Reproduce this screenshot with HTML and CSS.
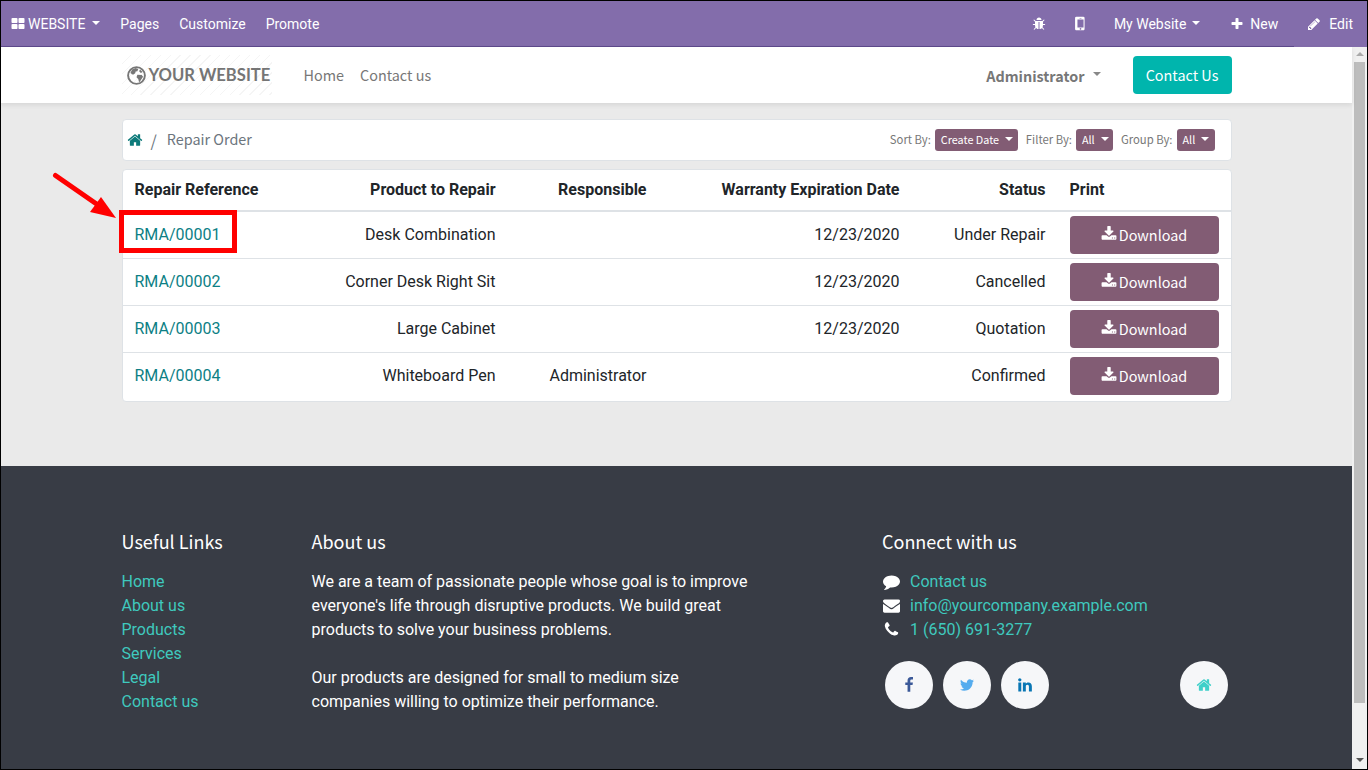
FILE: index.html
```html
<!DOCTYPE html>
<html lang="en">
<head>
<meta charset="utf-8">
<title>Repair Order</title>
<link rel="stylesheet" href="styles.css">
</head>
<body>
<svg class="defs" width="0" height="0" aria-hidden="true">
<symbol id="i-home" viewBox="0 0 1792 1792"><path d="M1472 992v480q0 26-19 45t-45 19h-384v-384h-256v384h-384q-26 0-45-19t-19-45v-480q0-1 .5-3t.5-3l575-474 575 474q1 2 1 6zm223-69l-62 74q-8 9-21 11h-3q-13 0-21-7l-692-577-692 577q-12 8-24 7-13-2-21-11l-62-74q-8-10-7-23.5t11-21.5l719-599q32-26 76-26t76 26l244 204v-195q0-14 9-23t23-9h192q14 0 23 9t9 23v408l219 182q10 8 11 21.5t-7 23.5z"/></symbol>
<symbol id="i-fb" viewBox="0 0 1792 1792"><path d="M1343 12v264h-157q-86 0-116 36t-30 108v189h293l-39 296h-254v759h-306v-759h-255v-296h255v-218q0-186 104-288.5t277-102.5q147 0 228 12z"/></symbol>
<symbol id="i-tw" viewBox="0 0 1792 1792"><path d="M1684 408q-67 98-162 167 1 14 1 42 0 130-38 259.5t-115.5 248.5-184.5 210.5-258 146-323 54.5q-271 0-496-145 35 4 78 4 225 0 401-138-105-2-188-64.5t-114-159.5q33 5 61 5 43 0 85-11-112-23-185.5-111.5t-73.5-205.5v-4q68 38 146 41-66-44-105-115t-39-154q0-88 44-163 121 149 294.5 238.5t371.5 99.5q-8-38-8-74 0-134 94.5-228.5t228.5-94.5q140 0 236 102 109-21 205-78-37 115-142 178 92-10 184-50z"/></symbol>
<symbol id="i-in" viewBox="0 0 1792 1792"><path d="M477 625v991h-330v-991h330zm21-306q1 73-50.5 122t-135.5 49h-2q-82 0-132-49t-50-122q0-74 51.5-122.5t134.5-48.5 133 48.5 51 122.5zm1166 729v568h-329v-530q0-105-40.5-164.5t-126.5-59.5q-63 0-105.5 34.5t-63.5 85.5q-11 30-11 81v553h-329q2-399 2-647t-1-296l-1-48h329v144h-2q20-32 41-56t56.5-52 87-43.5 114.5-15.5q171 0 275 113.5t104 332.5z"/></symbol>
<symbol id="i-plus" viewBox="0 0 1792 1792"><path d="M1600 736v192q0 40-28 68t-68 28h-416v416q0 40-28 68t-68 28h-192q-40 0-68-28t-28-68v-416h-416q-40 0-68-28t-28-68v-192q0-40 28-68t68-28h416v-416q0-40 28-68t68-28h192q40 0 68 28t28 68v416h416q40 0 68 28t28 68z"/></symbol>
<symbol id="i-pencil" viewBox="0 0 1792 1792"><path d="M491 1536l91-91-235-235-91 91v107h128v128h107zm523-928q0-22-22-22-10 0-17 7l-542 542q-7 7-7 17 0 22 22 22 10 0 17-7l542-542q7-7 7-17zm-54-192l416 416-832 832h-416v-416zm683 96q0 53-37 90l-166 166-416-416 166-165q36-38 90-38 53 0 91 38l235 234q37 39 37 91z"/></symbol>
<symbol id="i-th" viewBox="0 0 1792 1792"><path d="M832 1024v384q0 52-38 90t-90 38h-512q-52 0-90-38t-38-90v-384q0-52 38-90t90-38h512q52 0 90 38t38 90zm0-768v384q0 52-38 90t-90 38h-512q-52 0-90-38t-38-90v-384q0-52 38-90t90-38h512q52 0 90 38t38 90zm896 768v384q0 52-38 90t-90 38h-512q-52 0-90-38t-38-90v-384q0-52 38-90t90-38h512q52 0 90 38t38 90zm0-768v384q0 52-38 90t-90 38h-512q-52 0-90-38t-38-90v-384q0-52 38-90t90-38h512q52 0 90 38t38 90z"/></symbol>
<symbol id="i-dl" viewBox="0 0 1792 1792"><path d="M1344 1344q0-26-19-45t-45-19-45 19-19 45 19 45 45 19 45-19 19-45zm256 0q0-26-19-45t-45-19-45 19-19 45 19 45 45 19 45-19 19-45zm128-224v320q0 40-28 68t-68 28h-1472q-40 0-68-28t-28-68v-320q0-40 28-68t68-28h465l135 136q58 56 136 56t136-56l136-136h464q40 0 68 28t28 68zm-325-569q17 41-14 70l-448 448q-18 19-45 19t-45-19l-448-448q-31-29-14-70 17-39 59-39h256v-448q0-26 19-45t45-19h256q26 0 45 19t19 45v448h256q42 0 59 39z"/></symbol>
<symbol id="i-env" viewBox="0 0 1792 1792"><path d="M1792 710v794q0 66-47 113t-113 47h-1472q-66 0-113-47t-47-113v-794q44 49 101 87 362 246 497 345 57 42 92.5 65.5t94.5 48 110 24.5h2q51 0 110-24.5t94.5-48 92.5-65.5q170-123 498-345 57-39 100-87zm0-294q0 79-49 151t-122 123q-376 261-468 325-10 7-42.5 30.5t-54 38-52 32.5-57.5 27-50 9h-2q-23 0-50-9t-57.5-27-52-32.5-54-38-42.5-30.5q-91-64-262-182.5t-205-142.5q-62-42-117-115.5t-55-136.5q0-78 41.5-130t118.5-52h1472q65 0 112.5 47t47.5 113z"/></symbol>
<symbol id="i-comment" viewBox="0 0 1792 1792"><path d="M1792 896q0 174-120 321.5t-326 233-450 85.5q-70 0-145-8-198 175-460 242-49 14-114 22-17 2-30.5-9t-17.5-29v-1q-3-4-.5-12t2-10 4.5-9.5l6-9 7-8.5 8-9q7-8 31-34.5t34.5-38 31-39.5 32.5-51 27-59 26-76q-157-89-247.5-220t-90.5-281q0-130 71-248.5t191-204.5 286-136.5 348-50.5q244 0 450 85.5t326 233 120 321.5z"/></symbol>
<symbol id="i-phone" viewBox="0 0 1792 1792"><path d="M1600 1240q0 27-10 70.5t-21 68.5q-21 50-122 106-94 51-186 51-27 0-53-3.5t-57.5-12.5-47-14.5-55.5-20.5-49-18q-98-35-175-83-127-79-264-216t-216-264q-48-77-83-175-3-9-18-49t-20.5-55.5-14.5-47-12.5-57.5-3.5-53q0-92 51-186 56-101 106-122 25-11 68.5-21t70.5-10q14 0 21 3 18 6 53 76 11 19 30 54t35 63.5 31 53.5q3 4 17.5 25t21.5 35.5 7 28.5q0 20-28.5 50t-62 55-62 53-28.5 46q0 9 5 22.5t8.5 20.5 14 24 11.5 19q76 137 174 235t235 174q2 1 19 11.5t24 14 20.5 8.5 22.5 5q18 0 46-28.5t53-62 55-62 50-28.5q14 0 28.5 7t35.5 21.5 25 17.5q25 15 53.5 31t63.5 35 54 30q70 35 76 53 3 7 3 21z"/></symbol>
<symbol id="i-bug" viewBox="0 0 1792 1792"><path d="M1696 960q0 26-19 45t-45 19h-224q0 171-67 290l208 209q19 19 19 45t-19 45q-18 19-45 19t-45-19l-198-197q-5 5-15 13t-42 28.5-65 36.5-82 29-97 13v-896h-128v896q-51 0-101.5-13.5t-87-33-66-39-43.5-32.5l-15-14-183 207q-20 21-48 21-24 0-43-16-19-18-20.5-44.5t15.5-46.5l202-227q-58-114-58-274h-224q-26 0-45-19t-19-45 19-45 45-19h224v-294l-173-173q-19-19-19-45t19-45 45-19 45 19l173 173h844l173-173q19-19 45-19t45 19 19 45-19 45l-173 173v294h224q26 0 45 19t19 45zm-480-576h-640q0-133 93.5-226.5t226.5-93.5 226.5 93.5 93.5 226.5z"/></symbol>
<symbol id="i-mobile" viewBox="0 0 1792 1792"><path d="M976 1408q0-33-23.5-56.5t-56.5-23.5-56.5 23.5-23.5 56.5 23.5 56.5 56.5 23.5 56.5-23.5 23.5-56.5zm208-160v-704q0-13-9.5-22.5t-22.5-9.5h-512q-13 0-22.5 9.5t-9.5 22.5v704q0 13 9.5 22.5t22.5 9.5h512q13 0 22.5-9.5t9.5-22.5zm-192-848q0-16-16-16h-160q-16 0-16 16t16 16h160q16 0 16-16zm288-16v1024q0 52-38 90t-90 38h-640q-52 0-90-38t-38-90v-1024q0-52 38-90t90-38h640q52 0 90 38t38 90z"/></symbol>
</svg>
<div class="screen">
  <nav class="topbar">
    <div class="top-left">
      <span class="top-item brand"><svg class="ic ic-th"><use href="#i-th"/></svg>WEBSITE<i class="caret caret-l"></i></span>
      <span class="top-item">Pages</span>
      <span class="top-item">Customize</span>
      <span class="top-item">Promote</span>
    </div>
    <div class="top-right">
      <span class="top-icon"><svg class="ic ic-bug"><use href="#i-bug"/></svg></span>
      <span class="top-icon"><svg class="ic ic-mobile"><use href="#i-mobile"/></svg></span>
      <span class="top-item top-site">My Website<i class="caret caret-l caret-site"></i></span>
      <span class="top-item top-new"><svg class="ic ic-plus"><use href="#i-plus"/></svg>New</span>
      <span class="top-item top-edit"><svg class="ic ic-pencil"><use href="#i-pencil"/></svg>Edit</span>
    </div>
  </nav>
  <div class="viewport">
    <div class="page">
      <header class="site-header">
        <div class="container header-row">
          <div class="logo">
            <svg class="globe" viewBox="0 0 24 24"><circle cx="12" cy="12" r="9.6" fill="none" stroke="#777" stroke-width="2.2"/><path fill="#777" d="M7 5l4-1.5 3 1-1 2.5-2 .5-.5 2-2.5 1.5L5 9zM13 11l5 .5 1.5 2-3 4.5-1.5 2-1-4-2-2zM16 5l3 3-2 1-2-2z"/></svg>
            <span class="logo-text">YOUR WEBSITE</span>
          </div>
          <a class="site-link first">Home</a>
          <a class="site-link">Contact us</a>
          <span class="admin">Administrator<i class="caret caret-g"></i></span>
          <a class="contact-btn">Contact Us</a>
        </div>
      </header>
      <main class="main">
        <div class="container">
          <div class="crumbs">
            <svg class="ic ic-crumb"><use href="#i-home"/></svg>
            <span class="crumb-sep">/</span>
            <span class="crumb-cur">Repair Order</span>
            <div class="sorters">
              <span class="s-label">Sort By:</span><span class="pill pill-sort">Create Date<i class="caret caret-s"></i></span>
              <span class="s-label">Filter By:</span><span class="pill pill-all">All<i class="caret caret-s"></i></span>
              <span class="s-label">Group By:</span><span class="pill pill-all">All<i class="caret caret-s"></i></span>
            </div>
          </div>
          <div class="table-card">
            <table class="orders">
              <colgroup><col class="c1"><col class="c2"><col class="c3"><col class="c4"><col class="c5"><col class="c6"></colgroup>
              <thead>
                <tr><th>Repair Reference</th><th class="r">Product to Repair</th><th class="r">Responsible</th><th class="r">Warranty Expiration Date</th><th class="r">Status</th><th>Print</th></tr>
              </thead>
              <tbody>
                <tr><td><a class="ref">RMA/00001</a></td><td class="r">Desk Combination</td><td class="r"></td><td class="r">12/23/2020</td><td class="r">Under Repair</td><td class="btn-cell"><a class="dl"><svg class="ic ic-dl"><use href="#i-dl"/></svg>Download</a></td></tr>
                <tr><td><a class="ref">RMA/00002</a></td><td class="r">Corner Desk Right Sit</td><td class="r"></td><td class="r">12/23/2020</td><td class="r">Cancelled</td><td class="btn-cell"><a class="dl"><svg class="ic ic-dl"><use href="#i-dl"/></svg>Download</a></td></tr>
                <tr><td><a class="ref">RMA/00003</a></td><td class="r">Large Cabinet</td><td class="r"></td><td class="r">12/23/2020</td><td class="r">Quotation</td><td class="btn-cell"><a class="dl"><svg class="ic ic-dl"><use href="#i-dl"/></svg>Download</a></td></tr>
                <tr><td><a class="ref">RMA/00004</a></td><td class="r">Whiteboard Pen</td><td class="r">Administrator</td><td class="r"></td><td class="r">Confirmed</td><td class="btn-cell"><a class="dl"><svg class="ic ic-dl"><use href="#i-dl"/></svg>Download</a></td></tr>
              </tbody>
            </table>
          </div>
        </div>
      </main>
      <footer class="footer">
        <div class="container footer-row">
          <section class="f-links">
            <h5>Useful Links</h5>
            <ul>
              <li><a>Home</a></li><li><a>About us</a></li><li><a>Products</a></li><li><a>Services</a></li><li><a>Legal</a></li><li><a>Contact us</a></li>
            </ul>
          </section>
          <section class="f-about">
            <h5>About us</h5>
            <p>We are a team of passionate people whose goal is to improve everyone's life through disruptive products. We build great products to solve your business problems.</p>
            <p>Our products are designed for small to medium size companies willing to optimize their performance.</p>
          </section>
          <section class="f-connect">
            <h5>Connect with us</h5>
            <ul>
              <li><svg class="ic ic-contact"><use href="#i-comment"/></svg><a>Contact us</a></li>
              <li><svg class="ic ic-contact"><use href="#i-env"/></svg><a>info@yourcompany.example.com</a></li>
              <li><svg class="ic ic-contact"><use href="#i-phone"/></svg><a>1 (650) 691-3277</a></li>
            </ul>
            <div class="socials">
              <a class="social"><svg class="ic ic-fb"><use href="#i-fb"/></svg></a>
              <a class="social"><svg class="ic ic-tw"><use href="#i-tw"/></svg></a>
              <a class="social"><svg class="ic ic-in"><use href="#i-in"/></svg></a>
              <a class="social social-home"><svg class="ic ic-hm"><use href="#i-home"/></svg></a>
            </div>
          </section>
        </div>
      </footer>
    </div>
    <div class="scrollbar"><span class="arrow-up"></span><span class="thumb"></span><span class="arrow-down"></span></div>
  </div>
  <div class="redbox"></div>
  <svg class="red-arrow" width="70" height="50" viewBox="0 0 70 50"><path d="M3.5 3.5L46 33" stroke="#f00" stroke-width="5" stroke-linecap="round"/><path d="M64 46L38 40 49 25z" fill="#f00"/></svg>
</div>
</body>
</html>
```
FILE: styles.css
```css
* { box-sizing: border-box; }
html, body { margin: 0; padding: 0; }
body { font-family: Roboto, sans-serif; font-size: 16px; color: #212529; overflow: hidden; }
.defs { position: absolute; }
.screen { position: relative; width: 1368px; height: 770px; border: 1px solid #000; display: flex; flex-direction: column; overflow: hidden; background: #fff; }
.ic { display: inline-block; fill: currentColor; flex: none; }
.caret { display: inline-block; width: 0; height: 0; border-left: 4px solid transparent; border-right: 4px solid transparent; border-top: 4px solid currentColor; }

.topbar { flex: none; height: 46px; background: #836dab; border-bottom: 1px solid transparent; border-image: linear-gradient(to right, #5f4a8c 1292px, #836dab 1292px) 1; color: #fff; display: flex; justify-content: space-between; align-items: center; font-size: 14px; }
.top-left, .top-right { display: flex; align-items: center; height: 100%; }
.top-item { display: flex; align-items: center; padding: 0 10px; white-space: nowrap; }
.brand { padding-left: 10px; padding-right: 10px; }
.ic-th { width: 14px; height: 14px; margin-right: 3px; }
.caret-l { margin-left: 7px; margin-top: -1px; }
.caret-site { margin-left: 6px; }
.top-icon { display: flex; align-items: center; justify-content: center; width: 14px; }
.top-icon + .top-icon { margin-left: 28px; }
.top-site { margin-left: 16px; }
.ic-bug { width: 14px; height: 14px; }
.ic-mobile { width: 19px; height: 19px; }
.ic-plus { width: 14px; height: 14px; margin-right: 6px; }
.ic-pencil { width: 14px; height: 14px; margin-right: 8px; }
.top-new { margin-left: 10px; }
.top-edit { margin-left: 9px; padding-right: 14px; }

.viewport { flex: 1; min-height: 0; display: flex; }
.page { flex: 1; min-width: 0; display: flex; flex-direction: column; background: #eaeaea; }
.container { width: 1110px; margin: 0 auto; }

.site-header { flex: none; height: 56px; background: #fff; box-shadow: 0 2px 5px rgba(0,0,0,.09); position: relative; font-family: "Noto Sans CJK SC", sans-serif; }
.header-row { display: flex; align-items: center; height: 100%; }
.logo { width: 150px; height: 40px; display: flex; align-items: center; padding-left: 4px; margin-right: 32px; background: repeating-linear-gradient(135deg, #fff 0 6px, #f5f5f5 6px 7px); }
.globe { width: 21px; height: 21px; flex: none; margin-right: 2px; }
.logo-text { font-family: Lato, sans-serif; font-weight: 700; font-size: 16.6px; color: #757575; white-space: nowrap; }
.site-link { font-size: 14.4px; line-height: 24px; color: #777; }
.site-link.first { margin-right: 16px; }
.admin { margin-left: auto; font-size: 14.4px; font-weight: 700; color: #777; display: flex; align-items: center; margin-right: 32px; }
.caret-g { margin-left: 8px; margin-top: -3px; color: #888; }
.contact-btn { width: 99px; height: 38px; border-radius: 4px; background: #00b5ad; color: #fff; font-size: 14.4px; line-height: 38px; text-align: center; }

.main { flex: none; height: 363px; padding-top: 16px; font-size: 16px; }
.crumbs { height: 42px; background: #fff; border: 1px solid #dee2e6; border-radius: 4px; display: flex; align-items: center; padding: 0 16px 0 4px; margin-bottom: 8px; font-family: "Noto Sans CJK SC", sans-serif; }
.ic-crumb { width: 16px; height: 16px; color: #0d7a7a; }
.crumb-sep { margin-left: 8px; margin-right: 10px; color: #6c757d; font-size: 16px; }
.crumb-cur { font-size: 14.4px; color: #6c757d; line-height: 20px; margin-top: -2px; }
.sorters { margin-left: auto; display: flex; align-items: center; font-size: 11.3px; color: #777; }
.s-label { margin-right: 4px; margin-top: -2px; white-space: nowrap; }
.pill { display: flex; align-items: center; height: 22px; padding: 0 5px 2px 6px; background: #825c74; color: #fff; border-radius: 3px; font-size: 10.8px; margin-right: 8px; white-space: nowrap; }
.pill:last-child { margin-right: 0; width: 38px; }
.pill-sort { width: 83px; }
.pill-all { width: 37px; }
.caret-s { margin-left: 6px; margin-top: -1px; }

.table-card { background: #fff; border: 1px solid #dee2e6; border-radius: 4px; height: 233px; }
.orders { width: 100%; border-collapse: collapse; table-layout: fixed; }
.c1 { width: 175px; } .c2 { width: 210px; } .c3 { width: 151px; } .c4 { width: 253px; } .c5 { width: 146px; }
.orders th { height: 41px; padding: 0 12px 2px; text-align: left; font-weight: 700; border-bottom: 2px solid #dee2e6; white-space: nowrap; }
.orders td { height: 47px; padding: 0 12px; border-bottom: 1px solid #dee2e6; white-space: nowrap; }
.orders tr:last-child td { border-bottom: 0; }
.orders th.r, .orders td.r { text-align: right; }
.ref { color: #0d7f85; }
.btn-cell { vertical-align: middle; }
.dl { display: flex; align-items: center; justify-content: center; height: 38px; width: 149px; border-radius: 4px; background: #825c74; color: #fff; font-family: "Noto Sans CJK SC", sans-serif; font-size: 14.4px; }
.ic-dl { width: 16px; height: 16px; margin-right: 2px; margin-top: -2px; }

.footer { flex: 1; background: #383c45; color: #fff; padding-top: 64px; }
.footer-row { display: flex; }
.footer h5 { margin: 0 0 18px; font-family: "Noto Sans CJK SC", sans-serif; font-weight: 400; font-size: 18px; line-height: 22px; }
.footer ul { list-style: none; margin: 0; padding: 0; }
.footer li { line-height: 24px; display: flex; align-items: center; }
.footer a { color: #3fc9be; }
.f-links { width: 190px; }
.f-about { width: 570.5px; }
.f-about p { margin: 0 0 24px; width: 445px; line-height: 24px; }
.f-connect { flex: 1; }
.ic-contact { width: 17px; height: 17px; margin: -1px 10px 0 1px; color: #fff; }
.socials { display: flex; margin-top: 19px; padding: 0 4px 0 3px; gap: 10px; }
.social { display: flex; align-items: center; justify-content: center; width: 48px; height: 48px; border-radius: 50%; background: #f6f7f9; }
.social-home { margin-left: auto; }
.ic-fb { width: 16px; height: 16px; color: #3b5998; }
.ic-tw { width: 16px; height: 16px; color: #55acee; }
.ic-in { width: 16px; height: 16px; color: #0976b4; }
.ic-hm { width: 16px; height: 16px; color: #3fd0c9; }

.scrollbar { flex: none; width: 15px; background: #f0f0f0; display: flex; flex-direction: column; align-items: center; padding: 0 2px; }
.arrow-up { flex: none; width: 0; height: 0; margin: 5px 0 6px; border-left: 4px solid transparent; border-right: 4px solid transparent; border-bottom: 4px solid #aaa; }
.thumb { display: block; flex: none; width: 11px; height: 641px; background: #bdbdbd; }
.arrow-down { flex: none; width: 0; height: 0; margin: auto 0 7px; border-left: 4px solid transparent; border-right: 4px solid transparent; border-top: 4px solid #555; }

.redbox { position: absolute; left: 118px; top: 209px; width: 118px; height: 43px; border: 5px solid #f00; }
.red-arrow { position: absolute; left: 51px; top: 171px; }
```
